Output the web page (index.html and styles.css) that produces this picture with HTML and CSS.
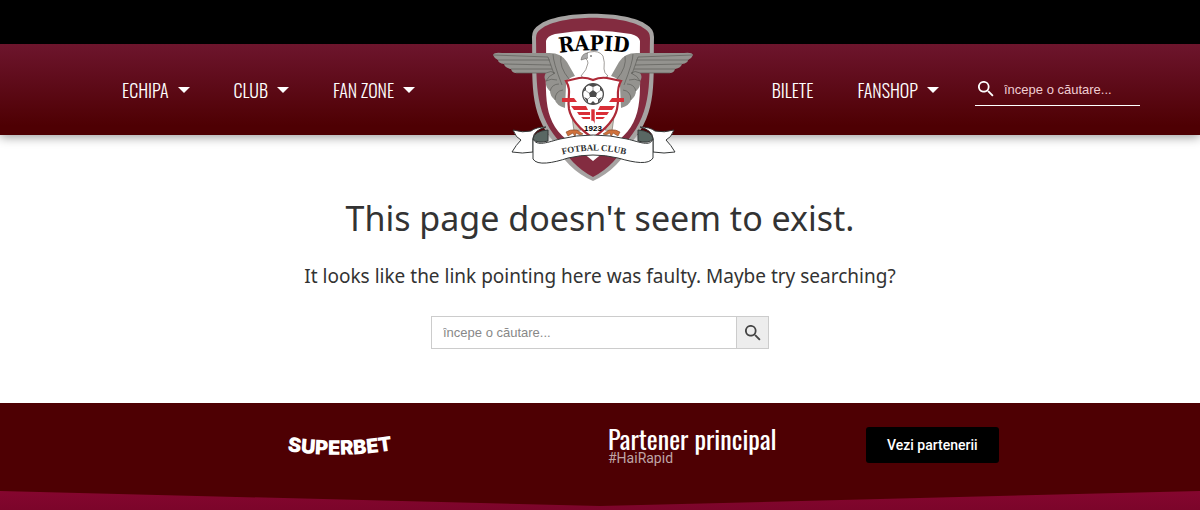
FILE: index.html
```html
<!DOCTYPE html>
<html lang="ro">
<head>
<meta charset="utf-8">
<meta name="viewport" content="width=device-width, initial-scale=1">
<title>Rapid Fotbal Club</title>
<link rel="stylesheet" href="styles.css">
</head>
<body>
<header class="header">
  <div class="topbar"></div>
  <div class="navbar">
    <nav class="menu" aria-label="Echipa si club">
      <a class="menu-link has-submenu" href="#">ECHIPA</a>
      <a class="menu-link has-submenu" href="#">CLUB</a>
      <a class="menu-link has-submenu" href="#">FAN ZONE</a>
    </nav>
    <a class="crest" href="#" aria-label="Rapid Fotbal Club">
      <svg class="crest-art" viewBox="493 13 201 170" aria-hidden="true">
        <defs>
          <path id="rapid-arc" d="M552 54Q594 47 636 54"/>
          <path id="club-arc" d="M554 157Q594 144 634 157"/>
          <g id="wing">
            <path fill="#94938f" d="M493 55Q494 52 502 53L547 53Q561 52 567 62L575 76Q566 78 566 86L565 108Q556 105 555 100Q550 96 550 91Q545 87 546 81Q543 77 546 73L516 73Q512 73 511 69Q505 68 504 64Q498 63 498 60Q494 58 493 55Z"/>
            <path fill="none" stroke="#5f5e5a" stroke-width=".7" d="M498 60L550 60M504 64L551 65M511 69L552 69M493 55L548 57L554 74M516 73H546M553 54Q553 62 562 85M561 56Q559 67 569 79M546 73Q551 70 555 73Q548 76 546 81Q551 78 557 80M550 91Q552 84 559 84M555 100Q555 91 563 90"/>
          </g>
          <g id="claw">
            <path fill="#c9c3b8" stroke="#68645d" stroke-width=".6" d="M572 117L575 120L581 130L574 131Z"/>
            <path fill="#d0713b" stroke="#703719" stroke-width=".5" d="M566 132Q570 129 577 130L583 134L580 135L576 133L575 137L573 133L568 136Z"/>
          </g>
          <g id="bars" fill="#d92e37">
            <path d="M562 98H574L577 102H562Z"/>
            <path d="M571 106H586L588 110H574Z"/>
            <path d="M577 112H590V115H579Z"/>
            <path d="M581 117H590V119H583Z"/>
          </g>
        </defs>
        <path fill="#a6a3a2" d="M532 37Q532 29 539 25C558 10 628 10 647 25Q654 29 654 37C653 80 658 112 632 142Q619 169 593 181Q566 169 554 142C528 112 533 80 532 37Z"/>
        <path fill="#832c40" d="M536 38Q536 32 541 29C560 14 626 14 645 29Q650 32 650 38C649 80 653 110 628 140Q616 165 593 177Q570 165 558 140C533 110 537 80 536 38Z"/>
        <path fill="#fff" d="M546 41Q547 36 555 34Q593 27 631 34Q639 36 640 41C639 91 646 118 619 140L593 161L567 140C540 118 547 91 546 41Z"/>
        <use href="#wing"/>
        <use href="#wing" transform="translate(1186 0) scale(-1 1)"/>
        <path fill="#fff" stroke="#77736f" stroke-width=".7" d="M581 76Q587 70 588 63Q588 60 585 58Q584 53 590 52Q599 50 603 56Q605 62 604 69Q604 73 608 76L593 84Z"/>
        <path fill="#aaa" stroke="#65615e" stroke-width=".6" d="M588 53Q582 53 581 60L588 58"/>
        <circle cx="591" cy="56" r=".8" fill="#222"/>
        <text class="crest-name"><textPath href="#rapid-arc" startOffset="50%">RAPID</textPath></text>
        <use href="#claw"/>
        <use href="#claw" transform="translate(1186 0) scale(-1 1)"/>
        <path fill="#fff" stroke="#ad2937" stroke-width="2.2" d="M566 81L579 78Q586 77 593 80Q600 77 607 78L621 81C615 91 620 97 617 109Q614 123 593 138Q572 124 569 109C567 97 572 91 566 81Z"/>
        <use href="#bars"/>
        <use href="#bars" transform="translate(1186 0) scale(-1 1)"/>
        <path fill="#d92e37" stroke="#fff" stroke-width=".6" d="M591 109H595V124L593 121H591Z"/>
        <circle cx="593" cy="94" r="10.4" fill="#fff" stroke="#4a4a4a" stroke-width="1.2"/>
        <path fill="#4a4a4a" d="M593 90L597 93L596 97H590L589 93ZM588 85L593 87L598 85L595 84H591ZM583 92L586 90L586 86ZM603 92L600 90L600 86ZM584 97L588 99L588 103ZM602 97L598 99L598 103ZM590 104L593 101L596 104Z"/>
        <path fill="none" stroke="#777" stroke-width=".7" d="M593 87V90M597 93L601 90M596 97L599 100M590 97L587 100M589 93L585 90"/>
        <text class="crest-year" x="593" y="131">1923</text>
        <g fill="#fff" stroke="#353838" stroke-linejoin="round">
          <path d="M546 127Q536 127 531 131Q523 133 513 130Q516 138 521 140Q516 145 512 152Q522 154 533 152V138Q534 130 546 127Z"/>
          <path d="M640 127Q650 127 655 131Q664 133 674 130Q671 138 666 140Q671 145 675 152Q664 154 653 152V138Q652 130 640 127Z"/>
          <path fill="#596763" d="M533 139Q534 131 548 130V141Q537 144 533 139ZM653 139Q652 131 638 130V141Q649 144 653 139Z"/>
          <path d="M533 139C537 147 548 142 560 139Q593 131 627 139C640 142 650 147 653 139V158C649 165 635 163 618 158Q593 152 568 158C553 163 537 166 533 159Z"/>
        </g>
        <text class="crest-club"><textPath href="#club-arc" startOffset="50%">FOTBAL CLUB</textPath></text>
      </svg>
    </a>
    <div class="nav-right">
      <nav class="menu" aria-label="Magazin">
        <a class="menu-link" href="#">BILETE</a>
        <a class="menu-link has-submenu" href="#">FANSHOP</a>
      </nav>
      <form class="nav-search" role="search">
        <button class="nav-search-button" aria-label="Caută"><svg class="nav-search-icon" viewBox="3 3 18 18" aria-hidden="true"><path fill="currentColor" d="M15.5 14h-.8l-.3-.3A6.5 6.5 0 1 0 13.7 14.4l.3.3v.8l5 5 1.5-1.5zm-6 0a4.5 4.5 0 1 1 0-9 4.5 4.5 0 0 1 0 9z"/></svg></button>
        <input class="nav-search-input" type="search" aria-label="Căutare" placeholder="începe o căutare...">
      </form>
    </div>
  </div>
</header>
<main class="main">
  <h1 class="title">This page doesn't seem to exist.</h1>
  <p class="lead">It looks like the link pointing here was faulty. Maybe try searching?</p>
  <form class="search" role="search">
    <input class="search-input" type="search" aria-label="Căutare în site" placeholder="începe o căutare...">
    <button class="search-button" aria-label="Caută în site"><svg class="search-icon" viewBox="3 3 18 18" aria-hidden="true"><path fill="currentColor" d="M15.5 14h-.8l-.3-.3A6.5 6.5 0 1 0 13.7 14.4l.3.3v.8l5 5 1.5-1.5zm-6 0a4.5 4.5 0 1 1 0-9 4.5 4.5 0 0 1 0 9z"/></svg></button>
  </form>
</main>
<footer class="footer">
  <div class="partners">
    <a class="sponsor" href="#" aria-label="Superbet">
      <svg class="sponsor-art" viewBox="0 0 112 30" aria-hidden="true">
        <defs><path id="sponsor-arc" d="M1 19Q56 27 111 18"/></defs>
        <text class="sponsor-name"><textPath href="#sponsor-arc" startOffset="50%">SUPERBET</textPath></text>
      </svg>
    </a>
    <div class="partner-text">
      <h2 class="partner-title">Partener principal</h2>
      <p class="partner-tag">#HaiRapid</p>
    </div>
    <a class="partner-button" href="#">Vezi partenerii</a>
  </div>
  <div class="footer-edge"></div>
</footer>
</body>
</html>
```
FILE: styles.css
```css
* { box-sizing: border-box; }
body { margin: 0; background: #fff; color: #333; font-family: "Liberation Sans", Arial, sans-serif; }
a { color: inherit; text-decoration: none; }
button { padding: 0; border: 0; cursor: pointer; }

.topbar { height: 44px; background: #000; }
.navbar {
  position: relative;
  display: flex;
  align-items: center;
  justify-content: space-between;
  height: 91px;
  padding: 0 5% 0 122px;
  background: linear-gradient(#6d152d, #4e0003 90%);
  box-shadow: 0 2px 10px rgba(0, 0, 0, .4);
  color: #fff;
}
.menu { display: flex; gap: 44px; }
.menu-link {
  display: flex;
  align-items: center;
  gap: 9px;
  font: 300 18px/28px Oswald, "Liberation Sans Narrow", "Roboto Condensed", "Liberation Sans", sans-serif;
  white-space: nowrap;
}
.has-submenu::after { content: ""; border: 6px solid transparent; border-top-color: #fff; border-bottom: 0; }
.crest { position: absolute; left: calc(50% - 107px); top: -31px; width: 201px; }
.crest-art { display: block; width: 100%; }
.crest-name { font: bold 21px "DejaVu Serif Condensed", "DejaVu Serif", serif; text-anchor: middle; }
.crest-year { font: bold 8px "Liberation Sans", sans-serif; text-anchor: middle; }
.crest-club { font: bold 9px "Liberation Serif", serif; text-anchor: middle; fill: #303333; }
.nav-right { display: flex; align-items: center; gap: 36px; }
.nav-search { display: flex; align-items: center; width: 165px; height: 32px; border-bottom: 1px solid #fff; }
.nav-search-button { display: flex; flex: none; padding: 0 10px 0 3px; background: none; color: #fff; }
.nav-search-icon { width: 16px; height: 16px; }
.nav-search-input { flex: 1; min-width: 0; padding: 0; border: 0; background: none; color: #fff; font: 13px "Liberation Sans", sans-serif; }
.nav-search-input::placeholder { color: #f0cdd2; }

.main { display: flex; flex-direction: column; align-items: center; padding: 58px 16px 54px; text-align: center; }
.title { margin: 0; font: 400 34px/50px "Noto Sans", sans-serif; }
.lead { margin: 18px 0 25px; font: 19px/30px "Noto Sans", sans-serif; }
.search { display: flex; width: 338px; max-width: 100%; height: 33px; border: 1px solid #ccc; }
.search-input { flex: 1; min-width: 0; padding: 0 11px; border: 0; background: #fff; font: 13px "Liberation Sans", sans-serif; }
.search-input::placeholder { color: #888; }
.search-button { display: grid; place-items: center; width: 32px; border-left: 1px solid #ccc; background: #ededed; color: #444; }
.search-icon { width: 16px; height: 16px; }

.footer { background: #4e0003; }
.partners { display: grid; grid-template-columns: 608fr 258fr 334fr; align-items: start; padding-top: 24px; }
.sponsor { justify-self: center; padding: 5px 0 0 72px; }
.sponsor-art { display: block; width: 112px; }
.sponsor-name { font: 900 20px Inter, sans-serif; fill: #fff; text-anchor: middle; }
.partner-title { margin: 0; color: #fff; font: 400 26px/24px Oswald, "Liberation Sans Narrow", "Roboto Condensed", "Liberation Sans", sans-serif; white-space: nowrap; }
.partner-tag { margin: 0; color: #bfa5a6; font: 14px/14px Roboto, sans-serif; }
.partner-button { justify-self: start; padding: 0 21px; border-radius: 3px; background: #000; color: #fff; font: 500 14px/36px Roboto, sans-serif; }
.footer-edge { height: 20px; margin-top: 26px; background: linear-gradient(#85062f, #7b052a); clip-path: polygon(0 0, 50% 75%, 100% 0, 100% 100%, 0 100%); }
```
